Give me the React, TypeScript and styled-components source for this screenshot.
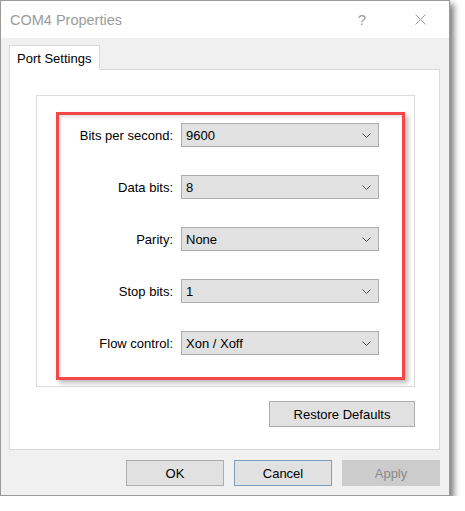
import styled, { createGlobalStyle } from 'styled-components';

const GlobalStyle = createGlobalStyle`
  html, body {
    margin: 0;
    padding: 0;
    background: #ffffff;
  }
  body {
    font-family: 'Liberation Sans', Arial, sans-serif;
  }
`;

const Window = styled.div`
  box-sizing: border-box;
  width: 450px;
  height: 496px;
  display: flex;
  flex-direction: column;
  border: 1px solid #9a9a9a;
  background: #f0f0f0;
  box-shadow: 4px 4px 6px rgba(0, 0, 0, 0.5);
`;

const TitleBar = styled.div`
  height: 37px;
  display: flex;
  align-items: center;
  background: #ffffff;
  padding: 0 0 0 9px;
`;

const TitleText = styled.span`
  flex: 1;
  font-size: 14.5px;
  color: #9b9b9b;
  padding-top: 1px;
`;

const TitleButton = styled.div`
  width: 46px;
  height: 37px;
  display: flex;
  align-items: center;
  justify-content: center;
  color: #9b9b9b;
  font-size: 15px;
  margin-right: ${(p: { $gap?: number }) => p.$gap ?? 0}px;
`;

const Body = styled.div`
  flex: 1;
  display: flex;
  flex-direction: column;
  padding: 7px 9px 0 8px;
`;

const TabRow = styled.div`
  display: flex;
  position: relative;
  z-index: 1;
  margin-bottom: -1px;
`;

const Tab = styled.div`
  box-sizing: border-box;
  width: 91px;
  height: 25px;
  background: #ffffff;
  border: 1px solid #d9d9d9;
  border-bottom: 1px solid #ffffff;
  font-size: 13px;
  color: #000;
  padding: 5px 0 0 7px;
`;

const Panel = styled.div`
  box-sizing: border-box;
  height: 381px;
  background: #ffffff;
  border: 1px solid #d9d9d9;
  display: flex;
  flex-direction: column;
`;

const GroupBox = styled.div`
  box-sizing: border-box;
  height: 292px;
  margin: 25px 24px 0 26px;
  border: 1px solid #dcdcdc;
  display: flex;
  flex-direction: column;
`;

const Highlight = styled.div`
  box-sizing: border-box;
  height: 268px;
  margin: 16px 9px 0 19px;
  border: 3px solid #f44848;
  box-shadow: 3px 3px 5px rgba(0, 0, 0, 0.28), inset 2px 2px 3px rgba(0, 0, 0, 0.12);
  padding: 8px 23px 0 0;
  display: flex;
  flex-direction: column;
  gap: 28px;
`;

const Row = styled.div`
  display: flex;
  align-items: center;
  gap: 8px;
`;

const Label = styled.span`
  width: 114px;
  text-align: right;
  font-size: 13px;
  color: #000;
`;

const Combo = styled.div`
  box-sizing: border-box;
  width: 198px;
  height: 24px;
  background: #e1e1e1;
  border: 1px solid #adadad;
  display: flex;
  align-items: center;
  justify-content: space-between;
  padding: 0 7px 0 4px;
  font-size: 13px;
  color: #000;
`;

const ButtonLine = styled.div`
  display: flex;
  justify-content: flex-end;
  gap: 10px;
  margin: ${(p: { $top: number; $right: number }) => `${p.$top}px ${p.$right}px 0 0`};
`;

const Button = styled.div<{ $width: number; $variant?: 'default' | 'disabled' }>`
  box-sizing: border-box;
  width: ${(p) => p.$width}px;
  height: 26px;
  display: flex;
  align-items: center;
  justify-content: center;
  font-size: 13px;
  background: ${(p) => (p.$variant === 'disabled' ? '#cccccc' : '#e1e1e1')};
  color: ${(p) => (p.$variant === 'disabled' ? '#8a8a8a' : '#000')};
  border: 1px solid
    ${(p) => (p.$variant === 'default' ? '#7f9dbd' : p.$variant === 'disabled' ? '#cccccc' : '#adadad')};
`;

const Chevron = () => (
  <svg width="9" height="5" viewBox="0 0 9 5">
    <polyline points="0.5,0.5 4.5,4.5 8.5,0.5" fill="none" stroke="#505050" strokeWidth="1" />
  </svg>
);

const CloseIcon = () => (
  <svg width="11" height="11" viewBox="0 0 11 11">
    <path d="M0.5 0.5 L10.5 10.5 M10.5 0.5 L0.5 10.5" stroke="#9b9b9b" strokeWidth="1" fill="none" />
  </svg>
);

const settings = [
  { label: 'Bits per second:', value: '9600' },
  { label: 'Data bits:', value: '8' },
  { label: 'Parity:', value: 'None' },
  { label: 'Stop bits:', value: '1' },
  { label: 'Flow control:', value: 'Xon / Xoff' },
];

export default function App() {
  return (
    <>
      <GlobalStyle />
      <Window>
        <TitleBar>
          <TitleText>COM4 Properties</TitleText>
          <TitleButton $gap={12}>?</TitleButton>
          <TitleButton $gap={6}>
            <CloseIcon />
          </TitleButton>
        </TitleBar>
        <Body>
          <TabRow>
            <Tab>Port Settings</Tab>
          </TabRow>
          <Panel>
            <GroupBox>
              <Highlight>
                {settings.map((s) => (
                  <Row key={s.label}>
                    <Label>{s.label}</Label>
                    <Combo>
                      <span>{s.value}</span>
                      <Chevron />
                    </Combo>
                  </Row>
                ))}
              </Highlight>
            </GroupBox>
            <ButtonLine $top={14} $right={24}>
              <Button $width={146}>Restore Defaults</Button>
            </ButtonLine>
          </Panel>
          <ButtonLine $top={10} $right={0}>
            <Button $width={98}>OK</Button>
            <Button $width={98} $variant="default">Cancel</Button>
            <Button $width={98} $variant="disabled">Apply</Button>
          </ButtonLine>
        </Body>
      </Window>
    </>
  );
}
